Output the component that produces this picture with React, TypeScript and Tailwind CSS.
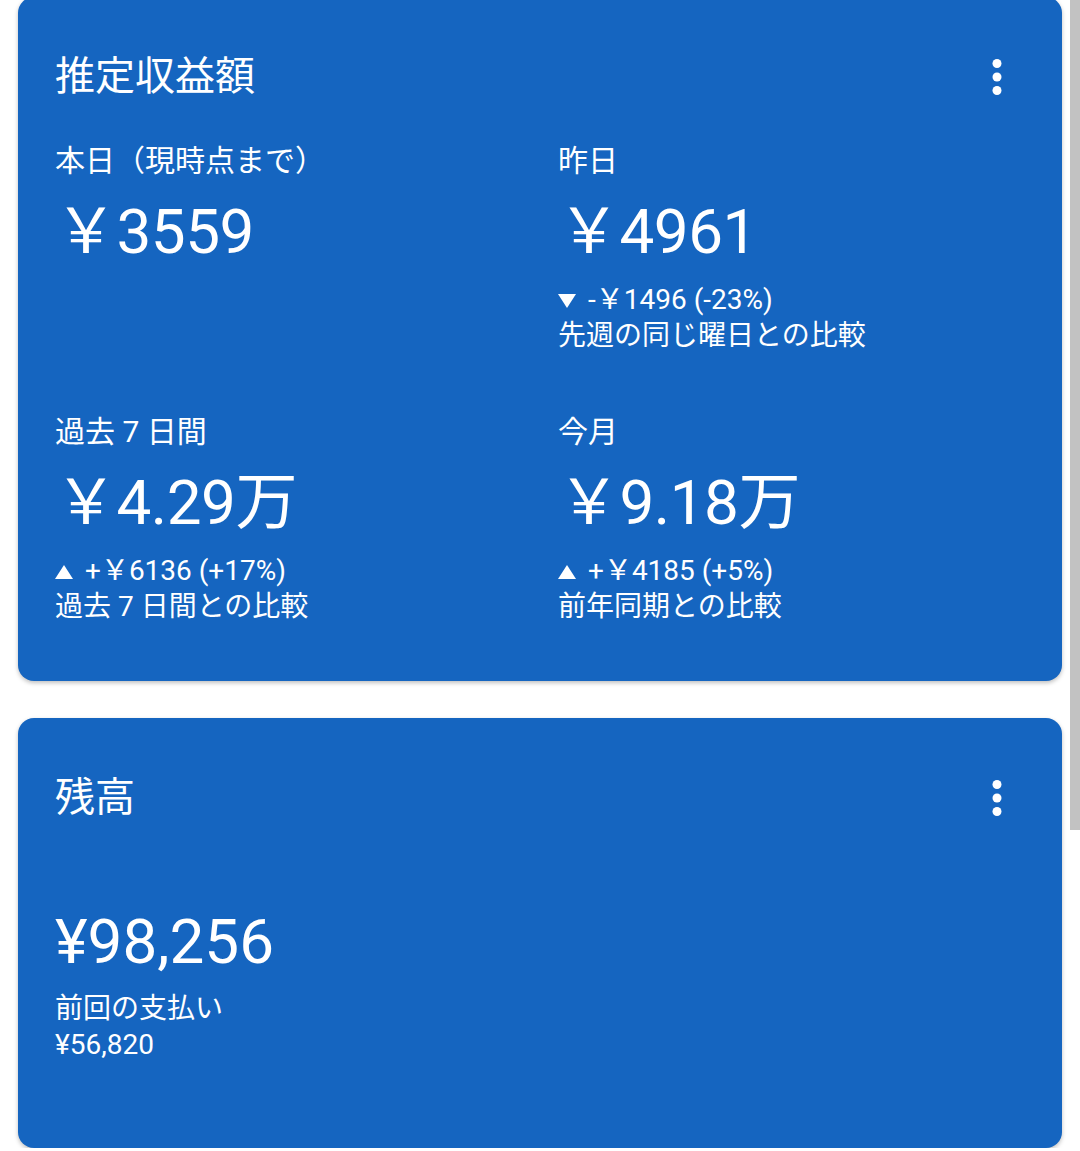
import React from 'react';

const font = { fontFamily: 'Roboto, "Noto Sans CJK JP", sans-serif' };

interface Stat {
  label: string;
  amount: string;
  up?: boolean;
  delta?: string;
  note?: string;
}

const stats: Stat[] = [
  { label: '本日（現時点まで）', amount: '￥3559' },
  { label: '昨日', amount: '￥4961', up: false, delta: '-￥1496 (-23%)', note: '先週の同じ曜日との比較' },
  { label: '過去 7 日間', amount: '￥4.29万', up: true, delta: '+￥6136 (+17%)', note: '過去 7 日間との比較' },
  { label: '今月', amount: '￥9.18万', up: true, delta: '+￥4185 (+5%)', note: '前年同期との比較' },
];

function Dots() {
  return (
    <svg width="12" height="40" viewBox="0 0 12 40" className="mr-[22px]">
      <circle cx="6" cy="6.5" r="4.5" fill="white" />
      <circle cx="6" cy="20" r="4.5" fill="white" />
      <circle cx="6" cy="33.5" r="4.5" fill="white" />
    </svg>
  );
}

function Triangle({ up }: { up: boolean }) {
  return (
    <svg width="18" height="14" viewBox="0 0 18 14" className="mr-[12px] inline-block align-[1px]">
      {up ? <path d="M9 0 L18 14 L0 14 Z" fill="white" /> : <path d="M0 0 L18 0 L9 14 Z" fill="white" />}
    </svg>
  );
}

function CardHeader({ title }: { title: string }) {
  return (
    <div className="flex items-center justify-between">
      <h2 className="text-[40px] leading-[48px] font-normal">{title}</h2>
      <Dots />
    </div>
  );
}

export default function App() {
  return (
    <div className="relative min-h-[1151px] bg-white px-[18px] text-white" style={font}>
      <div className="-mt-[3px] rounded-[16px] bg-[#1565c0] px-[37px] pt-[56px] pb-[56px] shadow-[0_2px_4px_rgba(0,0,0,0.25)]">
        <CardHeader title="推定収益額" />
        <div className="mt-[42px] grid grid-cols-2 gap-x-[36px] gap-y-[60px]">
          {stats.map((s) => (
            <div key={s.label}>
              <div className="text-[30px] leading-[36px]">{s.label}</div>
              <div className="mt-[17px] text-[62px] leading-[72px] tracking-[-0.5px]">{s.amount}</div>
              {s.delta && (
                <div className="mt-[14px] text-[28px] leading-[36px]">
                  <div>
                    <Triangle up={!!s.up} />
                    {s.delta}
                  </div>
                  <div>{s.note}</div>
                </div>
              )}
            </div>
          ))}
        </div>
      </div>

      <div className="mt-[37px] rounded-[16px] bg-[#1565c0] px-[37px] pt-[56px] pb-[85px] shadow-[0_2px_4px_rgba(0,0,0,0.25)]">
        <CardHeader title="残高" />
        <div className="mt-[84px] text-[62px] leading-[72px]">¥98,256</div>
        <div className="mt-[13px] text-[28px] leading-[36px]">前回の支払い</div>
        <div className="text-[28px] leading-[36px]">¥56,820</div>
      </div>

      <div className="absolute top-0 right-0 h-[833px] w-[10px] bg-[#c2c2c2]" />
    </div>
  );
}
